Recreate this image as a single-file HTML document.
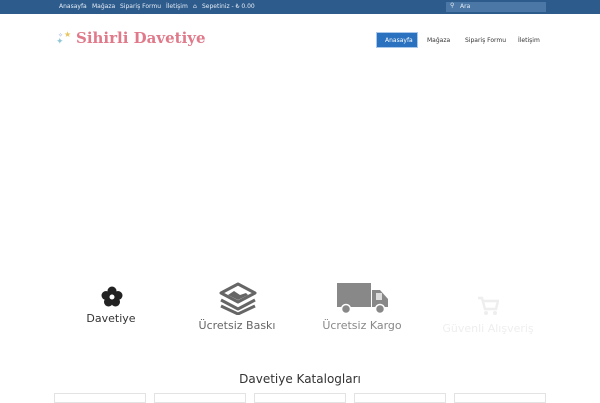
<!DOCTYPE html>
<html><head><meta charset="utf-8"><style>
*{margin:0;padding:0;box-sizing:border-box}
body{width:600px;height:400px;overflow:hidden;background:#fff;font-family:"DejaVu Sans","Liberation Sans",sans-serif;position:relative}
.top{position:absolute;left:0;top:0;width:600px;height:14px;background:#2c5b8c}
.top span{position:absolute;top:3px;font-size:6px;color:#e8eef6}
.search{position:absolute;left:446px;top:2px;width:100px;height:10px;background:#4a77a6}
.search span{position:absolute;left:14px;top:1px;font-size:6px;color:#e8eef6}
.logo{position:absolute;left:76px;top:29px;font-family:"DejaVu Serif",serif;font-size:15px;color:#e07a8a;font-weight:bold;letter-spacing:0}
.nav span{position:absolute;top:37px;font-size:6px;color:#333}
.btn{position:absolute;left:376px;top:32px;width:42px;height:16px;background:#2a72c0;border:1px solid #a9c8ea}
.f{position:absolute;font-size:11px;text-align:center;width:140px}
.box{position:absolute;top:393px;width:92px;height:10px;border:1px solid #e3e3e3}
</style></head><body>
<div class="top">
<span style="left:59px">Anasayfa</span>
<span style="left:92px">Mağaza</span>
<span style="left:120px">Sipariş Formu</span>
<span style="left:166px">İletişim</span>
<span style="left:193px">⌂</span>
<span style="left:202px">Sepetiniz - ₺ 0.00</span>
<div class="search"><span style="left:4px;top:0">⚲</span><span>Ara</span></div>
</div>
<svg style="position:absolute;left:54px;top:28px" width="24" height="20"><text x="2" y="16" font-size="9" fill="#8fc7d6">✦</text><text x="10" y="9" font-size="8" fill="#e8c45a">★</text><text x="4" y="9" font-size="6" fill="#9ad">✧</text></svg>
<div class="logo">Sihirli Davetiye</div>
<div class="btn"></div>
<div class="nav">
<span style="left:385px;color:#fff">Anasayfa</span>
<span style="left:427px">Mağaza</span>
<span style="left:465px">Sipariş Formu</span>
<span style="left:518px">İletişim</span>
</div>
<svg style="position:absolute;left:101px;top:286px" width="22" height="22" viewBox="0 0 22 22"><g fill="#222"><circle cx="11" cy="5" r="4.5"/><circle cx="5" cy="9.5" r="4.5"/><circle cx="17" cy="9.5" r="4.5"/><circle cx="7.5" cy="16" r="4.5"/><circle cx="14.5" cy="16" r="4.5"/></g><circle cx="11" cy="11" r="2.5" fill="#fff"/></svg>
<div class="f" style="left:41px;top:312px;color:#333">Davetiye</div>
<svg style="position:absolute;left:218px;top:281px" width="40" height="34" viewBox="0 0 40 34"><g fill="none" stroke="#666" stroke-width="3" stroke-linejoin="round"><path d="M20 3 L37 12 L20 21 L3 12 Z"/><path d="M3 19 L20 28 L37 19"/><path d="M3 25 L20 33 L37 25"/></g><path d="M10 14 L16 10 L22 14 L28 12 L30 14 L20 19 Z" fill="#666"/></svg>
<div class="f" style="left:167px;top:319px;color:#666">Ücretsiz Baskı</div>
<svg style="position:absolute;left:336px;top:282px" width="54" height="32" viewBox="0 0 54 32"><rect x="1" y="1" width="34" height="24" fill="#888"/><path d="M36 8 H44 L52 17 V25 H36 Z" fill="#888"/><rect x="40" y="11" width="6" height="7" fill="#ddd"/><circle cx="10" cy="27" r="4.5" fill="#888" stroke="#fff" stroke-width="1.5"/><circle cx="44" cy="27" r="4.5" fill="#888" stroke="#fff" stroke-width="1.5"/></svg>
<div class="f" style="left:292px;top:319px;color:#888">Ücretsiz Kargo</div>
<svg style="position:absolute;left:477px;top:296px" width="22" height="20" viewBox="0 0 22 20"><g fill="none" stroke="#eee" stroke-width="2.5"><path d="M1 2 H5 L8 13 H19 L21 5 H6"/></g><circle cx="9" cy="17" r="2" fill="#eee"/><circle cx="18" cy="17" r="2" fill="#eee"/></svg>
<div class="f" style="left:418px;top:322px;color:#eee">Güvenli Alışveriş</div>
<div class="f" style="left:230px;top:372px;color:#333;font-size:12px">Davetiye Katalogları</div>
<div class="box" style="left:54px"></div>
<div class="box" style="left:154px"></div>
<div class="box" style="left:254px"></div>
<div class="box" style="left:354px"></div>
<div class="box" style="left:454px"></div>
</body></html>
